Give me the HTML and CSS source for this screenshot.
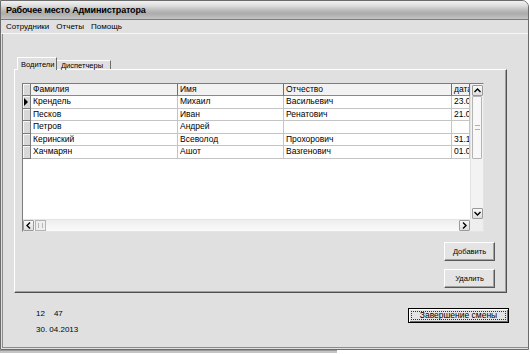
FILE: index.html
```html
<!DOCTYPE html>
<html lang="ru">
<head>
<meta charset="utf-8">
<title>Рабочее место Администратора</title>
<link rel="stylesheet" href="styles.css">
</head>
<body>
<div class="screen">
  <div class="window">
    <div class="titlebar"><span class="title">Рабочее место Администратора</span></div>
    <div class="menubar"><span>Сотрудники</span><span>Отчеты</span><span>Помощь</span></div>
    <div class="client">
      <div class="tabs">
        <div class="tab active">Водители</div>
        <div class="tab">Диспетчеры</div>
      </div>
      <div class="panel">
        <div class="grid">
          <div class="grid-view">
            <div class="row head">
              <div class="ind"></div><div class="cell">Фамилия</div><div class="cell">Имя</div><div class="cell">Отчество</div><div class="cell">дата</div>
            </div>
            <div class="row">
              <div class="ind"><span class="arrow"></span></div><div class="cell">Крендель</div><div class="cell">Михаил</div><div class="cell">Васильевич</div><div class="cell">23.05.1971</div>
            </div>
            <div class="row">
              <div class="ind"></div><div class="cell">Песков</div><div class="cell">Иван</div><div class="cell">Ренатович</div><div class="cell">21.03.1980</div>
            </div>
            <div class="row">
              <div class="ind"></div><div class="cell">Петров</div><div class="cell">Андрей</div><div class="cell"></div><div class="cell"></div>
            </div>
            <div class="row">
              <div class="ind"></div><div class="cell">Керинский</div><div class="cell">Всеволод</div><div class="cell">Прохорович</div><div class="cell">31.12.1965</div>
            </div>
            <div class="row">
              <div class="ind"></div><div class="cell">Хачмарян</div><div class="cell">Ашот</div><div class="cell">Вазгенович</div><div class="cell">01.08.1977</div>
            </div>
          </div>
          <div class="vscroll">
            <div class="sbtn"><svg width="7" height="5" viewBox="0 0 7 5"><path d="M0.5 4 L3.5 1 L6.5 4" fill="none" stroke="#000" stroke-width="1.4"/></svg></div>
            <div class="vthumb"><span class="grip"></span></div>
            <div class="vtrack"></div>
            <div class="sbtn"><svg width="7" height="5" viewBox="0 0 7 5"><path d="M0.5 1 L3.5 4 L6.5 1" fill="none" stroke="#000" stroke-width="1.4"/></svg></div>
          </div>
          <div class="hscroll">
            <div class="sbtn"><svg width="5" height="7" viewBox="0 0 5 7"><path d="M4 0.5 L1 3.5 L4 6.5" fill="none" stroke="#000" stroke-width="1.4"/></svg></div>
            <div class="hthumb"><span class="hgrip"></span></div>
            <div class="htrack"></div>
            <div class="sbtn"><svg width="5" height="7" viewBox="0 0 5 7"><path d="M1 0.5 L4 3.5 L1 6.5" fill="none" stroke="#000" stroke-width="1.4"/></svg></div>
          </div>
          <div class="corner"></div>
        </div>
        <div class="actions">
          <button class="btn">Добавить</button>
          <button class="btn">Удалить</button>
        </div>
      </div>
      <div class="footer">
        <div class="clock">
          <div class="time"><span>12</span><span>47</span></div>
          <div class="date">30. 04.2013</div>
        </div>
        <button class="btn default"><span class="focus">Завершение смены</span></button>
      </div>
    </div>
  </div>
  <div class="under"></div>
</div>
</body>
</html>
```
FILE: styles.css
```css
* { box-sizing: border-box; }
html, body { margin: 0; padding: 0; }
body {
  width: 530px;
  height: 354px;
  overflow: hidden;
  background: #ffffff;
  font-family: "Liberation Sans", Arial, sans-serif;
  font-size: 8.5px;
  color: #000;
}
.screen { width: 530px; height: 354px; }
.window {
  width: 529px;
  height: 350px;
  background: #e0e0e0;
  border: 1px solid #6c6c6c;
  border-top-right-radius: 7px;
  display: flex;
  flex-direction: column;
}
.titlebar {
  height: 19px;
  flex: none;
  border-top-right-radius: 6px;
  border-bottom: 1px solid #7c7c7c;
  background: linear-gradient(#f2f2f2 0%, #dedede 25%, #b8b8b8 55%, #acacac 70%, #c4c4c4 100%);
  padding-left: 5px;
  display: flex;
  align-items: center;
}
.title { font-weight: bold; font-size: 9px; letter-spacing: -0.15px; }
.menubar {
  height: 14px;
  flex: none;
  border-bottom: 1px solid #f6f6f6;
  display: flex;
  align-items: center;
  gap: 7px;
  padding-left: 5px;
  font-size: 8px;
}
.client {
  flex: 1;
  margin: 0 0 1px 1px;
  border-left: 1px solid #8c8c8c;
  border-bottom: 1px solid #8c8c8c;
  padding: 23px 0 0 11px;
}
.tabs {
  display: flex;
  align-items: flex-end;
  height: 13px;
  margin-left: 3px;
  margin-bottom: -1px;
  position: relative;
  z-index: 1;
  font-size: 7.5px;
}
.tab {
  height: 9px;
  margin-bottom: 1px;
  width: 54px;
  padding-left: 4px;
  line-height: 9px;
  border-top: 1px solid #ffffff;
  border-right: 1px solid #6c6c6c;
  background: #e0e0e0;
  white-space: nowrap;
}
.tab.active {
  height: 13px;
  margin-bottom: 0;
  width: 40px;
  padding-left: 3px;
  line-height: 13px;
  border-left: 1px solid #ffffff;
}
.panel {
  width: 493px;
  height: 224px;
  border: 1px solid;
  border-color: #ffffff #505050 #505050 #ffffff;
  box-shadow: inset -1px -1px #a0a0a0;
  padding: 13px 11px 0 7px;
  display: flex;
  flex-direction: column;
}
.grid {
  width: 462px;
  height: 149px;
  flex: none;
  border: 1px solid;
  border-color: #7c7c7c #e4e4e4 #e4e4e4 #7c7c7c;
  background: #ffffff;
  display: grid;
  grid-template-columns: 447px 13px;
  grid-template-rows: 135px 12px;
}
.grid-view { overflow: hidden; }
.row {
  display: grid;
  grid-template-columns: 8px 147px 106px 168px 18px;
  height: 13px;
}
.row:nth-child(odd) { height: 12px; }
.row.head { height: 12px; }
.cell {
  padding-left: 2px;
  border-right: 1px solid #c4c4c4;
  border-bottom: 1px solid #c4c4c4;
  white-space: nowrap;
  overflow: hidden;
  line-height: 11px;
}
.head .cell {
  background: #f2f2f2;
  border-right-color: #707070;
  border-bottom-color: #8a8a8a;
}
.ind {
  background: #d8d8d8;
  border-right: 1px solid #7a7a7a;
  border-bottom: 1px solid #7a7a7a;
  box-shadow: inset 1px 1px #f8f8f8;
  display: flex;
  align-items: center;
  padding-left: 1px;
}
.arrow {
  width: 0;
  height: 0;
  border-top: 4px solid transparent;
  border-bottom: 4px solid transparent;
  border-left: 4px solid #000;
}
.vscroll {
  background: #f3f3f3;
  border-left: 1px solid #e2e2e2;
  display: flex;
  flex-direction: column;
  padding: 1px 1px 0 1px;
}
.sbtn {
  width: 11px;
  height: 11px;
  flex: none;
  background: linear-gradient(#fafafa, #dedede);
  border: 1px solid #9a9a9a;
  border-radius: 1px;
  display: flex;
  align-items: center;
  justify-content: center;
}
.vthumb {
  height: 63px;
  flex: none;
  border: 1px solid #b4b4b4;
  border-radius: 1px;
  background: #f8f8f8;
  display: flex;
  align-items: center;
  justify-content: center;
}
.grip {
  width: 5px;
  height: 5px;
  border-top: 1px solid #b0b0b0;
  border-bottom: 1px solid #b0b0b0;
}
.vtrack { flex: 1; }
.hscroll {
  background: linear-gradient(#eeeeee, #fafafa);
  border-top: 1px solid #e4e4e4;
  display: flex;
  align-items: center;
}
.hthumb {
  width: 11px;
  height: 11px;
  flex: none;
  border: 1px solid #b4b4b4;
  background: #eeeeee;
  margin-left: 1px;
  display: flex;
  align-items: center;
  justify-content: center;
}
.hgrip {
  width: 5px;
  height: 5px;
  border-left: 1px solid #b8b8b8;
  border-right: 1px solid #b8b8b8;
}
.htrack { flex: 1; }
.corner { background: #eeeeee; }
.actions {
  display: flex;
  flex-direction: column;
  align-items: flex-end;
  gap: 8px;
  margin-top: 10px;
}
.btn {
  width: 51px;
  height: 19px;
  padding: 0;
  font-family: "Liberation Sans", Arial, sans-serif;
  font-size: 7.5px;
  color: #000;
  background: #e4e4e4;
  border: 1px solid;
  border-color: #ffffff #5a5a5a #5a5a5a #ffffff;
  box-shadow: inset -1px -1px #a0a0a0;
}
.footer {
  margin-left: 22px;
  width: 473px;
  display: flex;
  justify-content: space-between;
  align-items: flex-start;
  padding-top: 15px;
}
.clock { line-height: 11px; font-size: 8px; }
.time { display: flex; gap: 9px; }
.date { margin-top: 5px; }
.btn.default {
  width: 101px;
  height: 15px;
  font-size: 8.5px;
  border: 1px solid #000;
  box-shadow: inset 1px 1px #ffffff, inset -1px -1px #6a6a6a;
  padding: 2px;
  display: flex;
}
.focus {
  flex: 1;
  border: 1px dotted #333;
  line-height: 7px;
  display: flex;
  align-items: center;
  justify-content: center;
}
.under {
  width: 337px;
  height: 3px;
  background: #c4c4c4;
  border-top: 1px solid #9a9a9a;
}
```
